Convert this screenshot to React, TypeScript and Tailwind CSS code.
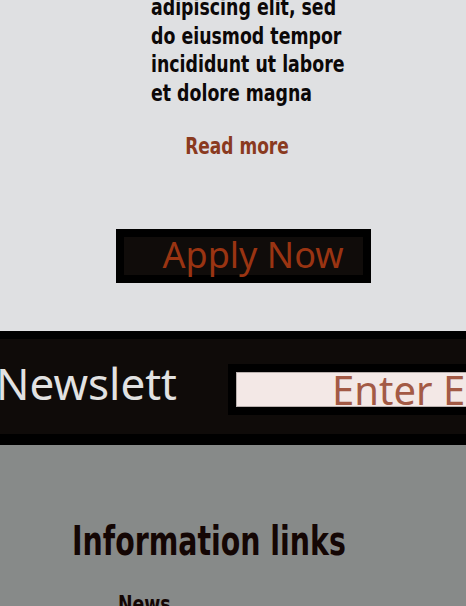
const impact = "font-['Impact','DejaVu_Sans',sans-serif] font-bold";
const sans = "font-['Noto_Sans',sans-serif]";

const App = () => {
    const lines = ["adipiscing elit, sed", "do eiusmod tempor", "incididunt ut labore", "et dolore magna"];

    return (
        <div className="w-[466px] h-[606px] overflow-hidden">
            {/* card */}
            <div className="bg-[#dfe0e2] pb-[48px]">
                <div className={`${impact} ml-[151px] -mt-[7px] text-[23px] leading-[28.5px] text-[#0c0808] [transform:scaleX(0.755)] origin-left`}>
                    {lines.map((l) => (
                        <div key={l} className="whitespace-nowrap">{l}</div>
                    ))}
                </div>
                <div className="flex justify-center pl-[8px] mt-[24px]">
                    <a className={`${impact} text-[23px] leading-[30px] text-[#8a3a1f] [transform:scaleX(0.74)]`}>Read more</a>
                </div>
                <div className="flex justify-center pl-[20px] mt-[68px]">
                    <button className="border-8 border-black bg-[#100c0a] w-[255px] h-[54px] text-left pl-[39px]">
                        <span className={`${sans} text-[36px] leading-[38px] text-[#9a3412] block -mt-[2px]`}>Apply Now</span>
                    </button>
                </div>
            </div>

            {/* newsletter */}
            <div className="border-t-8 border-b-[11px] border-black bg-[#0f0b09] h-[114px] flex items-center overflow-hidden">
                <div className="w-[228px] shrink-0 overflow-hidden">
                    <div className={`${sans} -ml-[4px] -mt-[8px] text-[44px] leading-[50px] text-[#e2e2e2] whitespace-nowrap w-[182px] overflow-hidden`}>Newsletter</div>
                </div>
                <div className="border-8 border-black shrink-0 w-[320px] h-[51px] mt-[6px]">
                    <input
                        placeholder="Enter Email"
                        className={`${sans} w-full h-full bg-[#f3e8e6] border border-[#b9b0ae] pl-[95px] text-[40px] leading-[35px] text-[#a35a45] placeholder:text-[#a35a45] outline-none`}
                    />
                </div>
            </div>

            {/* info links */}
            <div className="bg-[#878a89] h-[200px] pt-[76px]">
                <h2 className={`${impact} ml-[72px] text-[40px] leading-[40px] text-[#140604] whitespace-nowrap [transform:scaleX(0.71)] origin-left`}>Information links</h2>
                <div className={`${impact} ml-[118px] mt-[29px] text-[23px] leading-[28px] text-[#140604] [transform:scaleX(0.755)] origin-left`}>News</div>
            </div>
        </div>
    );
};

export default App;
